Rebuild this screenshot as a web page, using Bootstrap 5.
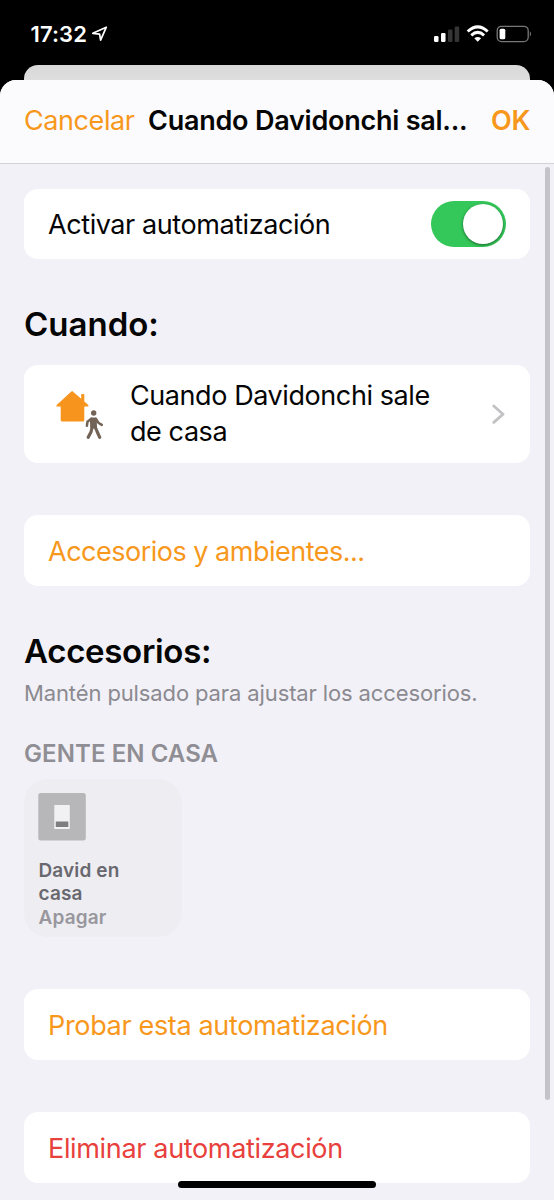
<!DOCTYPE html>
<html lang="es">
<head>
<meta charset="utf-8">
<meta name="viewport" content="width=device-width, initial-scale=1">
<title>Automatización</title>
<link href="https://cdn.jsdelivr.net/npm/bootstrap@5.3.0/dist/css/bootstrap.min.css" rel="stylesheet">
<style>
body{font-family:Inter,"Liberation Sans",sans-serif;background:#000;color:#050505;height:1200px;overflow:hidden;font-size:27px;line-height:35.6px;letter-spacing:-.42px}
.status{height:65px;padding:3px 22px 0 30.5px}
.clock{font-size:22px;font-weight:600;line-height:26px;letter-spacing:.1px}
.backsheet{height:15px;margin:0 24px;background:linear-gradient(#d8d8d9,#dededf);border-radius:14px 14px 0 0}
.sheet{height:1120px;background:#f2f1f7;border-radius:16px 16px 0 0;overflow:hidden}
.sheet-head{height:83.5px;background:#fbfbfd;border-bottom:1.5px solid #d3d3d6;padding:0 24px}
.sheet-title{letter-spacing:-.24px;margin-left:13.5px}
.sheet-body{padding:25.3px 24px 0}
.tint{color:#f7981d}
.danger-tint{color:#e8403c}
.panel{background:#fff;border-radius:14px;height:70.5px;padding:2px 24px 0}
.panel-tall{height:98px;padding-top:0}
.mode-icon{width:50px;height:52px;margin-left:7px;margin-right:25px}
.mode-text{margin-top:-1px}
.section-title{font-size:33px;font-weight:600;line-height:40px;letter-spacing:0}
.section-tight{letter-spacing:-.3px}
.hint{font-size:22px;line-height:28px;letter-spacing:-.12px;color:#8b8a90}
.room{font-size:24px;font-weight:600;line-height:30px;letter-spacing:.08px;color:#8f8e94;margin-top:32.5px}
.tile{width:158px;height:158px;border-radius:24px;background:#eeedf2;padding:14px 14px 0;margin-top:10px;font-size:19px;font-weight:600;line-height:23.6px;letter-spacing:.13px;color:#69686f}
.tile-text{padding:17.5px 0 0 .5px}
.off{color:#98979d}
.toggle{width:75px;height:46px;border-radius:23px;background:#34c759;padding:3px;margin-top:-2px}
.knob{width:40px;height:40px;border-radius:50%;background:#fff;box-shadow:0 1px 3px rgba(0,0,0,.5)}
.scroll-thumb{top:167px;left:545px;width:4.5px;height:933px;border-radius:3px;background:#c4c3c8}
.home-bar{left:178px;top:1181px;width:198px;height:7px;border-radius:4px;background:#000}
.gap-a{margin-top:45px}
.gap-b{margin-top:21px}
.gap-c{margin-top:52px}
.gap-d{margin-top:45px}
.gap-e{margin-top:52.2px}
.fit-long{letter-spacing:-.34px}
.fit-dots{letter-spacing:-.5px}
</style>
</head>
<body class="position-relative">
<div class="status d-flex justify-content-between align-items-center text-white">
  <div class="d-flex align-items-center">
    <span class="clock">17:32</span>
    <svg class="ms-1" width="18" height="18" viewBox="0 0 18 18" fill="none" stroke="#fff" stroke-width="1.7" stroke-linejoin="round"><path d="M15.3 2.2 1.8 8.3 8.6 9.2 9.6 15.2Z"/></svg>
  </div>
  <svg width="100" height="20" viewBox="0 0 100 20">
    <g fill="#fff"><rect x="2" y="12" width="4.5" height="6" rx="1.2"/><rect x="9" y="9" width="4.5" height="9" rx="1.2"/></g>
    <g fill="#353535"><rect x="16" y="5.5" width="4.5" height="12.5" rx="1.2"/><rect x="22.7" y="2.5" width="4.5" height="15.5" rx="1.2"/></g>
    <g fill="none" stroke="#fff" stroke-width="3"><path d="M35.7 7.5Q45.7-1.9 55.7 7.5"/><path d="M39.3 11.3Q45.7 5.5 52.1 11.3"/></g>
    <path d="M42.3 14.3Q45.7 11.5 49.1 14.3L45.7 17.8Z" fill="#fff"/>
    <rect x="65.2" y="2.3" width="31" height="15.3" rx="4.3" fill="none" stroke="#777" stroke-width="1.3"/>
    <rect x="67.6" y="4.7" width="5.7" height="10.6" rx="1.6" fill="#fff"/>
    <path d="M97.8 7.3Q100.3 10 97.8 12.7Z" fill="#777"/>
  </svg>
</div>
<div class="backsheet"></div>
<main class="sheet">
  <header class="sheet-head d-flex align-items-center">
    <span class="tint">Cancelar</span>
    <span class="sheet-title fw-semibold text-nowrap">Cuando Davidonchi sal...</span>
    <span class="tint fw-semibold ms-auto">OK</span>
  </header>
  <div class="sheet-body">
    <div class="panel d-flex align-items-center justify-content-between">
      <span>Activar automatización</span>
      <span class="toggle d-flex justify-content-end"><span class="knob"></span></span>
    </div>
    <h2 class="section-title mb-0 gap-a">Cuando:</h2>
    <div class="panel panel-tall d-flex align-items-center gap-b">
      <svg class="mode-icon flex-shrink-0" viewBox="0 0 50 52">
        <path d="M17.5 3.2 26.2 10.7V6.8Q26.2 6 27 6H28.5Q29.3 6 29.3 6.8V13.5L33.3 17Q34.3 18.5 32.5 18.6H29.3V32Q29.3 33.5 27.8 33.5H7.2Q5.7 33.5 5.7 32V18.6H2.2Q.5 18.5 1.7 17L16.3 3.4Q17 2.8 17.5 3.2Z" fill="#f7941e"/>
        <g fill="none" stroke="#736357" stroke-linecap="round" stroke-linejoin="round">
          <circle cx="38.7" cy="25" r="2.7" fill="#736357" stroke="none"/>
          <path d="M36.3 31 40.3 31 40.6 39 36.6 39Z" fill="#736357" stroke-width="2.8"/>
          <path d="M36.3 30.8 32.5 33.8 31.9 37.8M41 30.8 43.3 34.7 46.8 36.9" stroke-width="2.5"/>
          <path d="M37.2 39 36 44 33.2 49.3M40.2 39 42.3 44 44.7 49.3" stroke-width="3.2"/>
        </g>
      </svg>
      <span class="mode-text">Cuando Davidonchi sale<br>de casa</span>
      <svg class="ms-auto" width="14" height="22" viewBox="0 0 14 22" fill="none" stroke="#c2c2c4" stroke-width="2.8" stroke-linecap="round" stroke-linejoin="round"><path d="m1.8 3 9.2 8.2L1.8 19.4"/></svg>
    </div>
    <div class="panel tint d-flex align-items-center gap-c"><span class="fit-dots">Accesorios y ambientes...</span></div>
    <h2 class="section-title section-tight mb-0 gap-d">Accesorios:</h2>
    <p class="hint mb-0 mt-2">Mantén pulsado para ajustar los accesorios.</p>
    <h3 class="room mb-0">GENTE EN CASA</h3>
    <div class="tile">
      <svg class="d-block" width="48" height="48" viewBox="0 0 48 48"><rect x=".3" width="47.5" height="47.5" rx="2.5" fill="#b7b7b9"/><rect x="16.3" y="12" width="15.5" height="24" fill="#f1f1f3"/><rect x="17.8" y="28.5" width="12.5" height="5.5" fill="#7e7e81"/></svg>
      <div class="tile-text">David en<br>casa<br><span class="off">Apagar</span></div>
    </div>
    <div class="panel tint d-flex align-items-center gap-e"><span class="fit-long">Probar esta automatización</span></div>
    <div class="panel danger-tint d-flex align-items-center gap-e"><span class="fit-long">Eliminar automatización</span></div>
  </div>
</main>
<div class="scroll-thumb position-absolute"></div>
<div class="home-bar position-absolute"></div>
</body>
</html>
